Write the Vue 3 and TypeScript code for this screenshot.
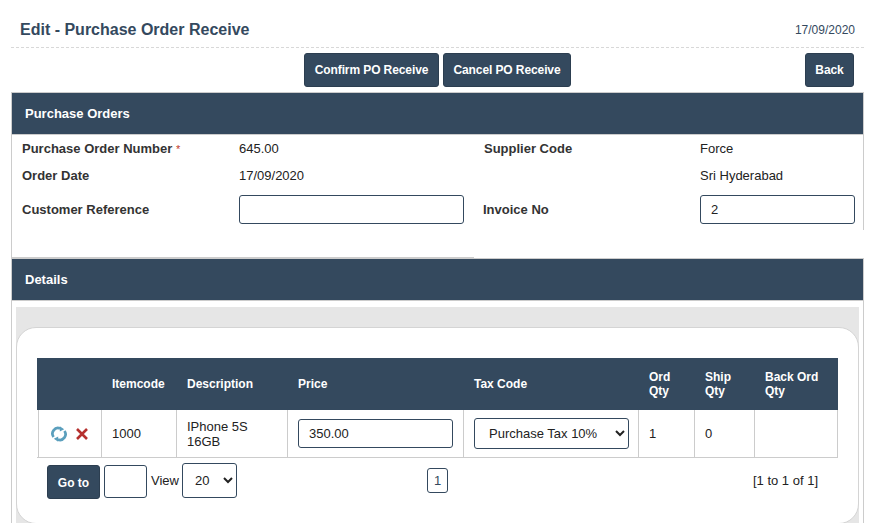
<script setup lang="ts">
interface Col { label: string; cls: string }
const cols: Col[] = [
  { label: '', cls: 'c0' },
  { label: 'Itemcode', cls: 'c1' },
  { label: 'Description', cls: 'c2' },
  { label: 'Price', cls: 'c3' },
  { label: 'Tax Code', cls: 'c4' },
  { label: 'Ord Qty', cls: 'c5' },
  { label: 'Ship Qty', cls: 'c6' },
  { label: 'Back Ord Qty', cls: 'c7' },
]
</script>

<template>
  <div class="page">
    <header class="title-row">
      <h1>Edit - Purchase Order Receive</h1>
      <span class="date">17/09/2020</span>
    </header>

    <div class="actions">
      <div class="actions-mid">
        <button class="btn btn-confirm">Confirm PO Receive</button>
        <button class="btn btn-cancel">Cancel PO Receive</button>
      </div>
      <button class="btn btn-back">Back</button>
    </div>

    <section class="panel">
      <h2 class="panel-head">Purchase Orders</h2>
      <div class="form">
        <div class="row row-text">
          <label class="lab">Purchase Order Number <span class="req">*</span></label>
          <span class="val">645.00</span>
          <label class="lab lab2">Supplier Code</label>
          <span class="val val-last">Force</span>
        </div>
        <div class="row row-text">
          <label class="lab">Order Date</label>
          <span class="val">17/09/2020</span>
          <span class="lab lab2"></span>
          <span class="val val-last">Sri Hyderabad</span>
        </div>
        <div class="row row-input">
          <label class="lab">Customer Reference</label>
          <input class="inp inp-ref" type="text" />
          <label class="lab lab3">Invoice No</label>
          <input class="inp inp-inv" type="text" value="2" />
        </div>
      </div>
      <div class="form-pad"></div>
      <div class="rule"></div>

      <h2 class="panel-head details-head">Details</h2>
      <div class="details-body">
        <div class="gray">
          <div class="card">
            <table class="grid">
              <thead>
                <tr>
                  <th v-for="c in cols" :key="c.cls" :class="c.cls">{{ c.label }}</th>
                </tr>
              </thead>
              <tbody>
                <tr>
                  <td class="icons">
                    <svg width="16" height="16" viewBox="0 0 16 16" class="ic-refresh">
                      <path d="M2.6 11A5.6 5.6 0 0 1 9 2.4" fill="none" stroke="#5b9fbd" stroke-width="2.7" />
                      <path d="M8.8 0.2L13.2 3.2 8.8 5.6Z" fill="#5b9fbd" />
                      <path d="M13.4 5A5.6 5.6 0 0 1 7 13.6" fill="none" stroke="#5b9fbd" stroke-width="2.7" />
                      <path d="M7.2 15.8L2.8 12.8 7.2 10.4Z" fill="#5b9fbd" />
                    </svg>
                    <svg width="12" height="12" viewBox="0 0 12 12" class="ic-x">
                      <path d="M1 1L11 11M11 1L1 11" stroke="#b5302e" stroke-width="2.6" fill="none" />
                    </svg>
                  </td>
                  <td>1000</td>
                  <td class="desc">IPhone 5S 16GB</td>
                  <td><input class="inp inp-price" type="text" value="350.00" /></td>
                  <td>
                    <select class="inp sel-tax">
                      <option>Purchase Tax 10%</option>
                    </select>
                  </td>
                  <td>1</td>
                  <td>0</td>
                  <td></td>
                </tr>
              </tbody>
            </table>

            <div class="pager">
              <div class="pager-left">
                <button class="btn btn-go">Go to</button>
                <input class="inp inp-go" type="text" />
                <span class="view">View</span>
                <select class="inp sel-view">
                  <option>20</option>
                </select>
              </div>
              <span class="page-num">1</span>
              <span class="count">[1 to 1 of 1]</span>
            </div>
          </div>
        </div>
      </div>
    </section>
  </div>
</template>

<style>
html, body { margin: 0; height: 523px; overflow: hidden; background: #fff; }
</style>

<style scoped>
.page {
  width: 853px;
  height: 523px;
  overflow: hidden;
  margin-left: 11px;
  font-family: "Liberation Sans", Arial, sans-serif;
  font-size: 13px;
  color: #222;
}
.title-row {
  height: 48px;
  box-sizing: border-box;
  border-bottom: 1px dashed #d8d8d8;
  padding: 13px 9px 0;
  display: flex;
  justify-content: space-between;
  align-items: center;
}
h1 { margin: 0; font-size: 16px; font-weight: 700; color: #34495e; }
.date { font-size: 12px; color: #34495e; }
.actions {
  height: 44px;
  padding: 5px 10px 0 293px;
  box-sizing: border-box;
  display: flex;
  justify-content: space-between;
}
.actions-mid { display: flex; gap: 4px; }
.btn {
  background: #34495e;
  color: #fff;
  border: 1px solid #2c3e50;
  border-radius: 3px;
  font-family: inherit;
  font-size: 12px;
  font-weight: 700;
  height: 34px;
  padding: 0;
  letter-spacing: -0.1px;
}
.btn-confirm { width: 135px; }
.btn-cancel { width: 128px; }
.btn-back { width: 49px; }
.panel {
  border-left: 1px solid #ccc;
  border-top: 1px solid #ccc;
}
.panel-head {
  margin: 0;
  background: #34495e;
  color: #fff;
  font-size: 13px;
  font-weight: 700;
  height: 41px;
  line-height: 41px;
  padding-left: 13px;
  border-bottom: 1px solid #ccc;
  border-right: 1px solid #ccc;
}
.form { border-right: 1px solid #ccc; padding-bottom: 4px; }
.row { display: flex; align-items: center; }
.row-text { height: 27px; }
.row-input { height: 33px; margin-top: 4px; }
.lab { width: 227px; padding-left: 10px; box-sizing: border-box; font-weight: 700; color: #333; flex: none; }
.req { color: #c0392b; font-weight: 400; font-size: 11px; }
.val { flex: none; width: 245px; }
.lab2 { width: 216px; padding-left: 0; }
.val-last { width: auto; }
.lab3 { width: 236px; padding-left: 19px; }
.inp {
  box-sizing: border-box;
  background: #fff;
  border: 1px solid #34495e;
  border-radius: 3px;
  font-family: inherit;
  font-size: 13px;
  color: #222;
  outline: none;
}
.inp-ref { width: 225px; height: 29px; flex: none; }
.inp-inv { width: 155px; height: 29px; flex: none; padding: 0 10px; }
.form-pad { height: 27px; }
.rule { width: 462px; height: 1px; background: #ccc; }
.details-head { border-top: 1px solid #ccc; }
.details-body {
  border-right: 1px solid #ccc;
  padding: 6px 4px 0;
}
.gray {
  background: #e6e6e6;
  padding-top: 20px;
  height: 240px;
  box-sizing: border-box;
}
.card {
  background: #fff;
  border: 1px solid #d4d4d4;
  border-radius: 20px;
  padding: 30px 20px 0;
  height: 197px;
  box-sizing: border-box;
}
.grid {
  border-collapse: separate;
  border-spacing: 0;
  table-layout: fixed;
  width: 801px;
}
th {
  background: #34495e;
  color: #fff;
  font-weight: 700;
  text-align: left;
  height: 52px;
  padding: 0 10px;
  box-sizing: border-box;
  line-height: 14px;
  font-size: 12px;
}
td {
  height: 48px;
  padding: 0 10px;
  box-sizing: border-box;
  border-right: 1px solid #ccc;
  border-bottom: 1px solid #ccc;
  line-height: 15px;
}
.c0 { width: 65px; }
.c1 { width: 75px; }
.c2 { width: 111px; }
.c3 { width: 176px; }
.c4 { width: 175px; }
.c5 { width: 56px; }
.c6 { width: 60px; }
.c7 { width: 83px; }
.icons {
  padding: 0 0 0 14px;
  white-space: nowrap;
  box-shadow: inset 1px 0 #fff, inset 2px 0 #ccc;
}
.ic-refresh, .ic-x { vertical-align: middle; }
.ic-x { margin-left: 9px; }
.inp-price { width: 155px; height: 29px; padding: 0 10px; display: block; }
.sel-tax { width: 155px; height: 31px; padding-left: 10px; display: block; }
.pager {
  display: flex;
  align-items: flex-start;
  padding: 5px 20px 0 10px;
}
.pager-left { display: flex; align-items: flex-start; gap: 4px; width: 380px; flex: none; }
.btn-go { width: 53px; height: 34px; margin-top: 2px; padding-top: 1px; letter-spacing: 0; }
.inp-go { width: 43px; height: 33px; margin-top: 2px; }
.view { line-height: 33px; margin-top: 1px; width: 27px; }
.sel-view { width: 55px; height: 35px; padding-left: 8px; }
.page-num {
  border: 1px solid #34495e;
  border-radius: 3px;
  width: 21px;
  height: 25px;
  box-sizing: border-box;
  line-height: 23px;
  text-align: center;
  margin-top: 5px;
  color: #34495e;
}
.count { line-height: 33px; margin-top: 1px; margin-left: auto; white-space: nowrap; }
</style>
